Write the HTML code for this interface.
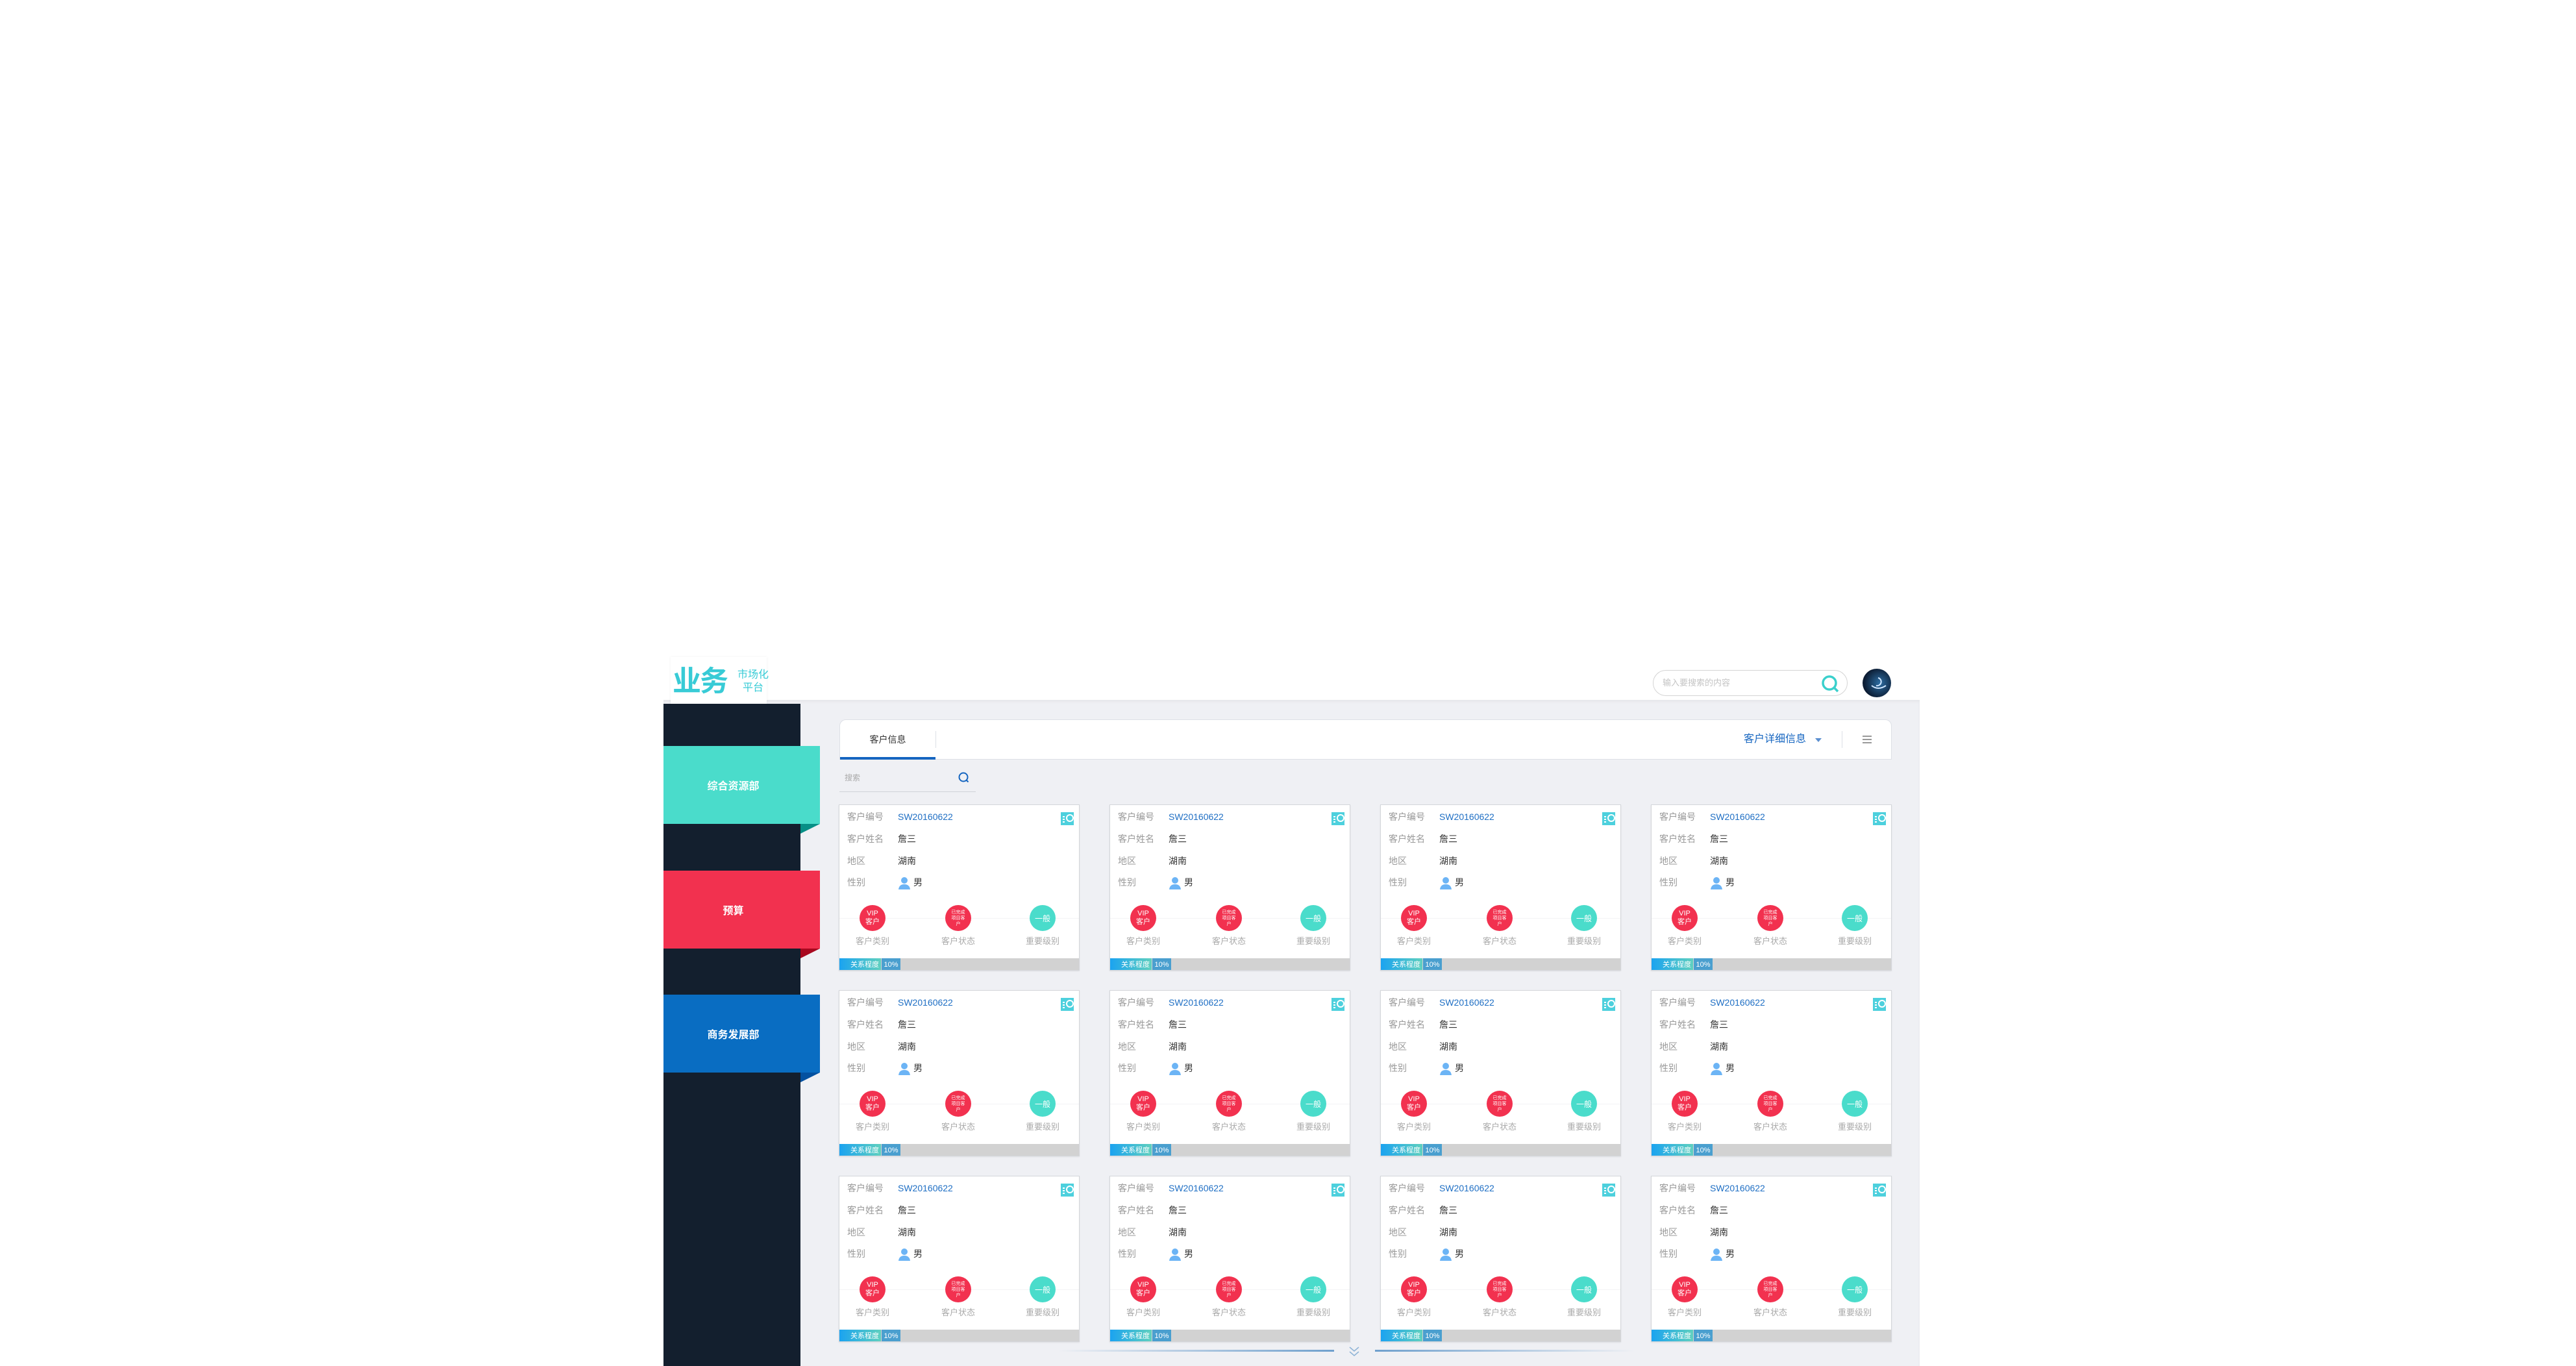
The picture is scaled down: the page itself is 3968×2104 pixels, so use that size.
<!DOCTYPE html>
<html><head><meta charset="utf-8">
<style>
*{margin:0;padding:0;box-sizing:border-box}
body{width:3968px;height:2104px;background:#fff;position:relative;overflow:hidden;font-family:"Liberation Sans","Noto Sans CJK SC",sans-serif}
.abs{position:absolute}
.hdr{left:1022px;top:1010px;width:1935px;height:68px;background:#fff}
.logoBox{left:1033px;top:1012px;width:148px;height:72px;background:#fff;box-shadow:0 0 4px rgba(0,0,0,.06)}
.gray{left:1022px;top:1078px;width:1935px;height:1026px;background:#eff0f4;box-shadow:inset 0 3px 4px rgba(0,0,0,.04)}
.side{left:1022px;top:1084px;width:211px;height:1020px;background:#131f2e}
.item{left:1022px;width:241px;height:120px;color:#fff;font-size:16px;font-weight:bold;display:flex;align-items:center;justify-content:center;padding-right:26px}
.fold{left:1233px;width:0;height:0;border-top:15px solid;border-right:30px solid transparent}
.panel{left:1293px;top:1108px;width:1621px;height:62px;background:#fff;border:1px solid #dde0e6;border-radius:10px 10px 0 0}
.card{position:absolute;width:371px;height:256px;background:#fff;border:1px solid #d4d6da;box-shadow:0 1px 2px rgba(0,0,0,.08);overflow:hidden}
.card .l{position:absolute;left:12px;font-size:14px;color:#999;line-height:20px}
.card .v{position:absolute;left:90px;font-size:14px;color:#333;line-height:20px}
.card .sw{color:#1f6fc4}
.card .ic{position:absolute;left:341px;top:11px;width:20px;height:20px;background:#4dd0dd}
.card .ic:before{content:"";position:absolute;left:3px;top:6px;width:3px;height:2px;background:#fff;box-shadow:0 4px 0 #fff,0 8px 0 #fff}
.card .ic:after{content:"";position:absolute;left:8px;top:3px;width:8px;height:8px;border:2px solid #fff;border-radius:50%}
.card .p{position:absolute;left:90px;top:110px}
.card .hl{position:absolute;left:0;top:174px;width:100%;height:1px;background:#f3f3f5}
.card .c{position:absolute;top:154px;width:40px;height:40px;border-radius:50%;color:#fff;display:flex;align-items:center;justify-content:center;text-align:center}
.card .cl{position:absolute;top:202px;width:80px;text-align:center;font-size:13px;color:#aaa;line-height:16px}
.card .bar{position:absolute;left:0;top:236px;width:100%;height:20px;background:#d2d2d2}
.card .g1{position:absolute;left:0;top:0;width:64px;height:20px;background:linear-gradient(90deg,#1ba3f0,#5fd0bf);color:#fff;font-size:11px;line-height:20px;text-align:right;padding-right:3px}
.card .g2{position:absolute;left:65px;top:0;width:29px;height:20px;background:#4a9fcf;color:#fff;font-size:11px;line-height:20px;text-align:center}
</style></head><body>
<div class="abs hdr"></div>
<div class="abs gray"></div>
<div class="abs logoBox"></div>
<div class="abs" style="left:1036px;top:1024px;font-size:44px;font-weight:bold;color:#38cbd6;line-height:52px;letter-spacing:-2px">业务</div>
<div class="abs" style="left:1133px;top:1030px;font-size:16px;color:#38cbd6;line-height:20px;width:54px;text-align:center">市场化<br>平台</div>
<div class="abs" style="left:2546px;top:1032px;width:300px;height:40px;border:1px solid #d4d4d4;border-radius:20px;background:#fff"></div>
<div class="abs" style="left:2561px;top:1042px;font-size:13px;color:#c4c4c4;line-height:20px">输入要搜索的内容</div>
<svg class="abs" style="left:2805px;top:1039px" width="30" height="30" viewBox="0 0 30 30"><circle cx="13" cy="13" r="10" fill="none" stroke="#3ad0cc" stroke-width="3.5"/><path d="M20 20l6 6" stroke="#3ad0cc" stroke-width="3.5"/></svg>
<div class="abs" style="left:2869px;top:1030px;width:44px;height:44px;border-radius:50%;background:radial-gradient(circle at 60% 50%,#2d6ea3,#0c1c33 70%)"></div>
<svg class="abs" style="left:2869px;top:1030px" width="44" height="44"><path d="M14 26 q10 8 22 0 M24 14 a6 6 0 1 1 -3 12" stroke="#cfe6ff" stroke-width="2" fill="none"/></svg>

<div class="abs side"></div>
<div class="abs item" style="top:1149px;background:#4adccb">综合资源部</div>
<div class="abs fold" style="top:1269px;border-top-color:#078f86"></div>
<div class="abs item" style="top:1341px;background:#f2314f">预算</div>
<div class="abs fold" style="top:1461px;border-top-color:#a8081f"></div>
<div class="abs item" style="top:1532px;background:#096dc2">商务发展部</div>
<div class="abs fold" style="top:1652px;border-top-color:#0451a0"></div>

<div class="abs panel"></div>
<div class="abs" style="left:1294px;top:1128px;width:147px;text-align:center;font-size:14px;color:#333;line-height:22px">客户信息</div>
<div class="abs" style="left:1441px;top:1126px;width:1px;height:26px;background:#dde0e6"></div>
<div class="abs" style="left:1294px;top:1166px;width:147px;height:4px;background:#1565c0"></div>
<div class="abs" style="left:2686px;top:1128px;font-size:16px;color:#1565c0;line-height:22px">客户详细信息</div>
<div class="abs" style="left:2796px;top:1137px;width:0;height:0;border-left:5px solid transparent;border-right:5px solid transparent;border-top:6px solid #5b8fd0"></div>
<div class="abs" style="left:2837px;top:1126px;width:1px;height:26px;background:#dde0e6"></div>
<div class="abs" style="left:2869px;top:1133px;width:14px;height:2px;background:#999;box-shadow:0 5px 0 #999,0 10px 0 #999"></div>
<div class="abs" style="left:1301px;top:1189px;font-size:12px;color:#aaa">搜索</div>
<svg class="abs" style="left:1475px;top:1188px" width="20" height="20"><circle cx="9" cy="9" r="6.5" fill="none" stroke="#1565c0" stroke-width="2"/><path d="M13.5 13.5l3 3" stroke="#1565c0" stroke-width="2"/></svg>
<div class="abs" style="left:1293px;top:1219px;width:210px;height:1px;background:#cfd2d8"></div>

<!-- cards -->
<div class="card" style="left:1292px;top:1239px"><div class="l" style="top:8px">客户编号</div><div class="v sw" style="top:8px">SW20160622</div><div class="ic"></div><div class="l" style="top:42px">客户姓名</div><div class="v" style="top:42px">詹三</div><div class="l" style="top:76px">地区</div><div class="v" style="top:76px">湖南</div><div class="l" style="top:109px">性别</div><svg class="p" width="20" height="20"><circle cx="10" cy="6" r="5" fill="#6cb4f5"/><path d="M1 20q1-8 9-8t9 8z" fill="#6cb4f5"/></svg><div class="v" style="top:109px;left:114px">男</div><div class="hl"></div><div class="c" style="left:31px;background:#f2314f;font-size:11px;line-height:13px">VIP<br>客户</div><div class="c" style="left:163px;background:#f2314f;font-size:7px;line-height:9px">已完成<br>项目客<br>户</div><div class="c" style="left:293px;background:#4adccb;font-size:12px">一般</div><div class="cl" style="left:11px">客户类别</div><div class="cl" style="left:143px">客户状态</div><div class="cl" style="left:273px">重要级别</div><div class="bar"><div class="g1">关系程度</div><div class="g2">10%</div></div></div>
<div class="card" style="left:1709px;top:1239px"><div class="l" style="top:8px">客户编号</div><div class="v sw" style="top:8px">SW20160622</div><div class="ic"></div><div class="l" style="top:42px">客户姓名</div><div class="v" style="top:42px">詹三</div><div class="l" style="top:76px">地区</div><div class="v" style="top:76px">湖南</div><div class="l" style="top:109px">性别</div><svg class="p" width="20" height="20"><circle cx="10" cy="6" r="5" fill="#6cb4f5"/><path d="M1 20q1-8 9-8t9 8z" fill="#6cb4f5"/></svg><div class="v" style="top:109px;left:114px">男</div><div class="hl"></div><div class="c" style="left:31px;background:#f2314f;font-size:11px;line-height:13px">VIP<br>客户</div><div class="c" style="left:163px;background:#f2314f;font-size:7px;line-height:9px">已完成<br>项目客<br>户</div><div class="c" style="left:293px;background:#4adccb;font-size:12px">一般</div><div class="cl" style="left:11px">客户类别</div><div class="cl" style="left:143px">客户状态</div><div class="cl" style="left:273px">重要级别</div><div class="bar"><div class="g1">关系程度</div><div class="g2">10%</div></div></div>
<div class="card" style="left:2126px;top:1239px"><div class="l" style="top:8px">客户编号</div><div class="v sw" style="top:8px">SW20160622</div><div class="ic"></div><div class="l" style="top:42px">客户姓名</div><div class="v" style="top:42px">詹三</div><div class="l" style="top:76px">地区</div><div class="v" style="top:76px">湖南</div><div class="l" style="top:109px">性别</div><svg class="p" width="20" height="20"><circle cx="10" cy="6" r="5" fill="#6cb4f5"/><path d="M1 20q1-8 9-8t9 8z" fill="#6cb4f5"/></svg><div class="v" style="top:109px;left:114px">男</div><div class="hl"></div><div class="c" style="left:31px;background:#f2314f;font-size:11px;line-height:13px">VIP<br>客户</div><div class="c" style="left:163px;background:#f2314f;font-size:7px;line-height:9px">已完成<br>项目客<br>户</div><div class="c" style="left:293px;background:#4adccb;font-size:12px">一般</div><div class="cl" style="left:11px">客户类别</div><div class="cl" style="left:143px">客户状态</div><div class="cl" style="left:273px">重要级别</div><div class="bar"><div class="g1">关系程度</div><div class="g2">10%</div></div></div>
<div class="card" style="left:2543px;top:1239px"><div class="l" style="top:8px">客户编号</div><div class="v sw" style="top:8px">SW20160622</div><div class="ic"></div><div class="l" style="top:42px">客户姓名</div><div class="v" style="top:42px">詹三</div><div class="l" style="top:76px">地区</div><div class="v" style="top:76px">湖南</div><div class="l" style="top:109px">性别</div><svg class="p" width="20" height="20"><circle cx="10" cy="6" r="5" fill="#6cb4f5"/><path d="M1 20q1-8 9-8t9 8z" fill="#6cb4f5"/></svg><div class="v" style="top:109px;left:114px">男</div><div class="hl"></div><div class="c" style="left:31px;background:#f2314f;font-size:11px;line-height:13px">VIP<br>客户</div><div class="c" style="left:163px;background:#f2314f;font-size:7px;line-height:9px">已完成<br>项目客<br>户</div><div class="c" style="left:293px;background:#4adccb;font-size:12px">一般</div><div class="cl" style="left:11px">客户类别</div><div class="cl" style="left:143px">客户状态</div><div class="cl" style="left:273px">重要级别</div><div class="bar"><div class="g1">关系程度</div><div class="g2">10%</div></div></div>

<div class="card" style="left:1292px;top:1525px"><div class="l" style="top:8px">客户编号</div><div class="v sw" style="top:8px">SW20160622</div><div class="ic"></div><div class="l" style="top:42px">客户姓名</div><div class="v" style="top:42px">詹三</div><div class="l" style="top:76px">地区</div><div class="v" style="top:76px">湖南</div><div class="l" style="top:109px">性别</div><svg class="p" width="20" height="20"><circle cx="10" cy="6" r="5" fill="#6cb4f5"/><path d="M1 20q1-8 9-8t9 8z" fill="#6cb4f5"/></svg><div class="v" style="top:109px;left:114px">男</div><div class="hl"></div><div class="c" style="left:31px;background:#f2314f;font-size:11px;line-height:13px">VIP<br>客户</div><div class="c" style="left:163px;background:#f2314f;font-size:7px;line-height:9px">已完成<br>项目客<br>户</div><div class="c" style="left:293px;background:#4adccb;font-size:12px">一般</div><div class="cl" style="left:11px">客户类别</div><div class="cl" style="left:143px">客户状态</div><div class="cl" style="left:273px">重要级别</div><div class="bar"><div class="g1">关系程度</div><div class="g2">10%</div></div></div>
<div class="card" style="left:1709px;top:1525px"><div class="l" style="top:8px">客户编号</div><div class="v sw" style="top:8px">SW20160622</div><div class="ic"></div><div class="l" style="top:42px">客户姓名</div><div class="v" style="top:42px">詹三</div><div class="l" style="top:76px">地区</div><div class="v" style="top:76px">湖南</div><div class="l" style="top:109px">性别</div><svg class="p" width="20" height="20"><circle cx="10" cy="6" r="5" fill="#6cb4f5"/><path d="M1 20q1-8 9-8t9 8z" fill="#6cb4f5"/></svg><div class="v" style="top:109px;left:114px">男</div><div class="hl"></div><div class="c" style="left:31px;background:#f2314f;font-size:11px;line-height:13px">VIP<br>客户</div><div class="c" style="left:163px;background:#f2314f;font-size:7px;line-height:9px">已完成<br>项目客<br>户</div><div class="c" style="left:293px;background:#4adccb;font-size:12px">一般</div><div class="cl" style="left:11px">客户类别</div><div class="cl" style="left:143px">客户状态</div><div class="cl" style="left:273px">重要级别</div><div class="bar"><div class="g1">关系程度</div><div class="g2">10%</div></div></div>
<div class="card" style="left:2126px;top:1525px"><div class="l" style="top:8px">客户编号</div><div class="v sw" style="top:8px">SW20160622</div><div class="ic"></div><div class="l" style="top:42px">客户姓名</div><div class="v" style="top:42px">詹三</div><div class="l" style="top:76px">地区</div><div class="v" style="top:76px">湖南</div><div class="l" style="top:109px">性别</div><svg class="p" width="20" height="20"><circle cx="10" cy="6" r="5" fill="#6cb4f5"/><path d="M1 20q1-8 9-8t9 8z" fill="#6cb4f5"/></svg><div class="v" style="top:109px;left:114px">男</div><div class="hl"></div><div class="c" style="left:31px;background:#f2314f;font-size:11px;line-height:13px">VIP<br>客户</div><div class="c" style="left:163px;background:#f2314f;font-size:7px;line-height:9px">已完成<br>项目客<br>户</div><div class="c" style="left:293px;background:#4adccb;font-size:12px">一般</div><div class="cl" style="left:11px">客户类别</div><div class="cl" style="left:143px">客户状态</div><div class="cl" style="left:273px">重要级别</div><div class="bar"><div class="g1">关系程度</div><div class="g2">10%</div></div></div>
<div class="card" style="left:2543px;top:1525px"><div class="l" style="top:8px">客户编号</div><div class="v sw" style="top:8px">SW20160622</div><div class="ic"></div><div class="l" style="top:42px">客户姓名</div><div class="v" style="top:42px">詹三</div><div class="l" style="top:76px">地区</div><div class="v" style="top:76px">湖南</div><div class="l" style="top:109px">性别</div><svg class="p" width="20" height="20"><circle cx="10" cy="6" r="5" fill="#6cb4f5"/><path d="M1 20q1-8 9-8t9 8z" fill="#6cb4f5"/></svg><div class="v" style="top:109px;left:114px">男</div><div class="hl"></div><div class="c" style="left:31px;background:#f2314f;font-size:11px;line-height:13px">VIP<br>客户</div><div class="c" style="left:163px;background:#f2314f;font-size:7px;line-height:9px">已完成<br>项目客<br>户</div><div class="c" style="left:293px;background:#4adccb;font-size:12px">一般</div><div class="cl" style="left:11px">客户类别</div><div class="cl" style="left:143px">客户状态</div><div class="cl" style="left:273px">重要级别</div><div class="bar"><div class="g1">关系程度</div><div class="g2">10%</div></div></div>

<div class="card" style="left:1292px;top:1811px"><div class="l" style="top:8px">客户编号</div><div class="v sw" style="top:8px">SW20160622</div><div class="ic"></div><div class="l" style="top:42px">客户姓名</div><div class="v" style="top:42px">詹三</div><div class="l" style="top:76px">地区</div><div class="v" style="top:76px">湖南</div><div class="l" style="top:109px">性别</div><svg class="p" width="20" height="20"><circle cx="10" cy="6" r="5" fill="#6cb4f5"/><path d="M1 20q1-8 9-8t9 8z" fill="#6cb4f5"/></svg><div class="v" style="top:109px;left:114px">男</div><div class="hl"></div><div class="c" style="left:31px;background:#f2314f;font-size:11px;line-height:13px">VIP<br>客户</div><div class="c" style="left:163px;background:#f2314f;font-size:7px;line-height:9px">已完成<br>项目客<br>户</div><div class="c" style="left:293px;background:#4adccb;font-size:12px">一般</div><div class="cl" style="left:11px">客户类别</div><div class="cl" style="left:143px">客户状态</div><div class="cl" style="left:273px">重要级别</div><div class="bar"><div class="g1">关系程度</div><div class="g2">10%</div></div></div>
<div class="card" style="left:1709px;top:1811px"><div class="l" style="top:8px">客户编号</div><div class="v sw" style="top:8px">SW20160622</div><div class="ic"></div><div class="l" style="top:42px">客户姓名</div><div class="v" style="top:42px">詹三</div><div class="l" style="top:76px">地区</div><div class="v" style="top:76px">湖南</div><div class="l" style="top:109px">性别</div><svg class="p" width="20" height="20"><circle cx="10" cy="6" r="5" fill="#6cb4f5"/><path d="M1 20q1-8 9-8t9 8z" fill="#6cb4f5"/></svg><div class="v" style="top:109px;left:114px">男</div><div class="hl"></div><div class="c" style="left:31px;background:#f2314f;font-size:11px;line-height:13px">VIP<br>客户</div><div class="c" style="left:163px;background:#f2314f;font-size:7px;line-height:9px">已完成<br>项目客<br>户</div><div class="c" style="left:293px;background:#4adccb;font-size:12px">一般</div><div class="cl" style="left:11px">客户类别</div><div class="cl" style="left:143px">客户状态</div><div class="cl" style="left:273px">重要级别</div><div class="bar"><div class="g1">关系程度</div><div class="g2">10%</div></div></div>
<div class="card" style="left:2126px;top:1811px"><div class="l" style="top:8px">客户编号</div><div class="v sw" style="top:8px">SW20160622</div><div class="ic"></div><div class="l" style="top:42px">客户姓名</div><div class="v" style="top:42px">詹三</div><div class="l" style="top:76px">地区</div><div class="v" style="top:76px">湖南</div><div class="l" style="top:109px">性别</div><svg class="p" width="20" height="20"><circle cx="10" cy="6" r="5" fill="#6cb4f5"/><path d="M1 20q1-8 9-8t9 8z" fill="#6cb4f5"/></svg><div class="v" style="top:109px;left:114px">男</div><div class="hl"></div><div class="c" style="left:31px;background:#f2314f;font-size:11px;line-height:13px">VIP<br>客户</div><div class="c" style="left:163px;background:#f2314f;font-size:7px;line-height:9px">已完成<br>项目客<br>户</div><div class="c" style="left:293px;background:#4adccb;font-size:12px">一般</div><div class="cl" style="left:11px">客户类别</div><div class="cl" style="left:143px">客户状态</div><div class="cl" style="left:273px">重要级别</div><div class="bar"><div class="g1">关系程度</div><div class="g2">10%</div></div></div>
<div class="card" style="left:2543px;top:1811px"><div class="l" style="top:8px">客户编号</div><div class="v sw" style="top:8px">SW20160622</div><div class="ic"></div><div class="l" style="top:42px">客户姓名</div><div class="v" style="top:42px">詹三</div><div class="l" style="top:76px">地区</div><div class="v" style="top:76px">湖南</div><div class="l" style="top:109px">性别</div><svg class="p" width="20" height="20"><circle cx="10" cy="6" r="5" fill="#6cb4f5"/><path d="M1 20q1-8 9-8t9 8z" fill="#6cb4f5"/></svg><div class="v" style="top:109px;left:114px">男</div><div class="hl"></div><div class="c" style="left:31px;background:#f2314f;font-size:11px;line-height:13px">VIP<br>客户</div><div class="c" style="left:163px;background:#f2314f;font-size:7px;line-height:9px">已完成<br>项目客<br>户</div><div class="c" style="left:293px;background:#4adccb;font-size:12px">一般</div><div class="cl" style="left:11px">客户类别</div><div class="cl" style="left:143px">客户状态</div><div class="cl" style="left:273px">重要级别</div><div class="bar"><div class="g1">关系程度</div><div class="g2">10%</div></div></div>

<div class="abs" style="left:1630px;top:2079px;width:425px;height:3px;background:linear-gradient(90deg,rgba(110,160,205,0),#6fa0cd)"></div>
<div class="abs" style="left:2118px;top:2079px;width:400px;height:3px;background:linear-gradient(90deg,#6fa0cd,rgba(110,160,205,0))"></div>
<svg class="abs" style="left:2076px;top:2072px" width="20" height="20"><path d="M3 3l7 6 7-6M3 10l7 6 7-6" stroke="#8eb3d6" stroke-width="1.5" fill="none"/></svg>
</body></html>
